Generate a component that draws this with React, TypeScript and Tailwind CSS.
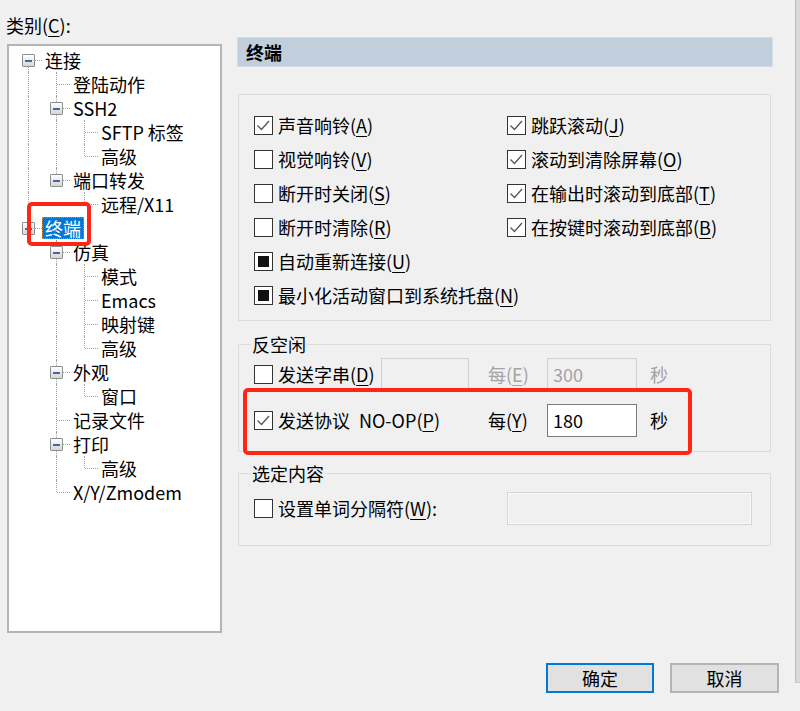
import React from 'react';

type TreeNode = { label: string; children?: TreeNode[] };
type Row = { node: TreeNode; level: number; guides: boolean[]; last: boolean; first: boolean };

const tree: TreeNode[] = [
  {
    label: '连接',
    children: [
      { label: '登陆动作' },
      { label: 'SSH2', children: [{ label: 'SFTP 标签' }, { label: '高级' }] },
      { label: '端口转发', children: [{ label: '远程/X11' }] },
    ],
  },
  {
    label: '终端',
    children: [
      { label: '仿真', children: [{ label: '模式' }, { label: 'Emacs' }, { label: '映射键' }, { label: '高级' }] },
      { label: '外观', children: [{ label: '窗口' }] },
      { label: '记录文件' },
      { label: '打印', children: [{ label: '高级' }] },
      { label: 'X/Y/Zmodem' },
    ],
  },
];

function flatten(nodes: TreeNode[], level: number, guides: boolean[], out: Row[]) {
  nodes.forEach((node, i) => {
    const last = i === nodes.length - 1;
    out.push({ node, level, guides, last, first: level === 0 && i === 0 });
    if (node.children) flatten(node.children, level + 1, [...guides, !last], out);
  });
  return out;
}

const rows = flatten(tree, 0, [], []);

// mnemonic letter, underlined like a Win32 dialog
const M = ({ c }: { c: string }) => (
  <>
    (<span className="underline underline-offset-[3px]">{c}</span>)
  </>
);

const Check = ({ state }: { state: 'on' | 'off' | 'mixed' }) => (
  <span className="w-[19px] h-[19px] border border-[#333333] bg-white flex items-center justify-center shrink-0">
    {state === 'on' && (
      <svg width="17" height="17" viewBox="0 0 17 17">
        <path d="M2.5 8.5 L6.5 12.5 L14 4" fill="none" stroke="#555555" strokeWidth="1.3" />
      </svg>
    )}
    {state === 'mixed' && <span className="w-[11px] h-[11px] bg-[#111111]" />}
  </span>
);

const Option = ({ state, children }: { state: 'on' | 'off' | 'mixed'; children: React.ReactNode }) => (
  <div className="h-[34px] flex items-center gap-[5px] whitespace-nowrap">
    <Check state={state} />
    <span className="leading-[24px]">{children}</span>
  </div>
);

const TreeRow = ({ row }: { row: Row }) => {
  const selected = row.node.label === '终端';
  return (
    <div className="h-[24px] flex items-stretch">
      {row.guides.map((g, i) => (
        <div key={i} className="relative w-[28px] shrink-0">
          {g && <div className="absolute left-[14px] top-0 bottom-0 border-l border-dotted border-[#a0a0a0]" />}
        </div>
      ))}
      <div className="relative w-[28px] shrink-0">
        <div
          className={`absolute left-[14px] border-l border-dotted border-[#a0a0a0] ${row.first ? 'top-[12px]' : 'top-0'} ${
            row.last ? 'bottom-[12px]' : 'bottom-0'
          }`}
        />
        <div className="absolute left-[15px] right-0 top-[12px] border-t border-dotted border-[#a0a0a0]" />
        {row.node.children && (
          <div className="absolute left-[8px] top-[6px] w-[13px] h-[13px] border border-[#8f8f8f] rounded-[1px] bg-gradient-to-b from-white to-[#d6d6d6] flex items-center justify-center">
            <span className="w-[7px] h-[2px] bg-[#4a64a8]" />
          </div>
        )}
      </div>
      <span
        className={`mt-px h-[22px] leading-[22px] px-[3px] whitespace-nowrap ${
          selected ? 'bg-[#0078d7] text-white outline outline-1 outline-dotted outline-[#d08a3c] -outline-offset-1' : ''
        }`}
      >
        {row.node.label}
      </span>
    </div>
  );
};

export default function App() {
  return (
    <div className="w-[800px] h-[711px] bg-[#f0f0f0] flex relative overflow-hidden font-['Noto_Sans_CJK_SC',sans-serif] text-[18px] text-black">
      <div className="w-[795px] flex flex-col">
        <div className="flex">
          {/* category tree */}
          <div className="flex flex-col">
            <div className="pl-[6px] pt-[13px] leading-[24px]">
              类别<M c="C" />:
            </div>
            <div className="ml-[7px] mt-[7px] w-[215px] h-[589px] border-2 border-[#b4b4b4] bg-white pt-[2px] pl-[5px]">
              {rows.map((r, i) => (
                <TreeRow key={i} row={r} />
              ))}
            </div>
          </div>

          {/* terminal page */}
          <div className="ml-[15px] mt-[37px] w-[536px] flex flex-col">
            <div className="h-[30px] bg-[#c1cfdd] border border-[#d4dee8] pl-[8px] flex items-center font-bold">终端</div>

            <div className="ml-px w-[533px] mt-[27px] border border-[#dcdcdc] pl-[15px] pt-[13px] pb-[8px] grid grid-cols-[253px_1fr]">
              <Option state="on">声音响铃<M c="A" /></Option>
              <Option state="on">跳跃滚动<M c="J" /></Option>
              <Option state="off">视觉响铃<M c="V" /></Option>
              <Option state="on">滚动到清除屏幕<M c="O" /></Option>
              <Option state="off">断开时关闭<M c="S" /></Option>
              <Option state="on">在输出时滚动到底部<M c="T" /></Option>
              <Option state="off">断开时清除<M c="R" /></Option>
              <Option state="on">在按键时滚动到底部<M c="B" /></Option>
              <div className="col-span-2">
                <Option state="mixed">自动重新连接<M c="U" /></Option>
              </div>
              <div className="col-span-2">
                <Option state="mixed">最小化活动窗口到系统托盘<M c="N" /></Option>
              </div>
            </div>

            <div className="relative ml-px w-[533px] mt-[23px] border border-[#dcdcdc] pl-[15px] pt-[13px] pb-[14px] flex flex-col gap-[13px]">
              <span className="absolute left-[12px] -top-[13px] bg-[#f0f0f0] px-px leading-[24px]">反空闲</span>
              <div className="h-[33px] flex items-center whitespace-nowrap">
                <div className="w-[127px] flex items-center gap-[5px]">
                  <Check state="off" />
                  <span>发送字串<M c="D" /></span>
                </div>
                <div className="w-[88px] h-[33px] border border-[#d0d0d0] bg-[#f0f0f0]" />
                <div className="w-[78px] pl-[19px] text-[#a3a3a3]">每<M c="E" /></div>
                <div className="w-[90px] h-[33px] border border-[#d0d0d0] bg-[#f0f0f0] pl-[5px] leading-[31px] text-[#a3a3a3]">300</div>
                <span className="ml-[13px] text-[#a3a3a3]">秒</span>
              </div>
              <div className="h-[33px] flex items-center whitespace-nowrap">
                <div className="w-[234px] flex items-center gap-[5px]">
                  <Check state="on" />
                  <span>
                    发送协议<span className="ml-[9px]">NO-OP<M c="P" /></span>
                  </span>
                </div>
                <div className="w-[59px]">每<M c="Y" /></div>
                <div className="w-[90px] h-[33px] border border-[#7a7a7a] bg-white pl-[5px] leading-[31px]">180</div>
                <span className="ml-[13px]">秒</span>
              </div>
            </div>

            <div className="relative ml-px w-[533px] mt-[21px] border border-[#dcdcdc] pl-[15px] pt-[18px] pb-[20px]">
              <span className="absolute left-[12px] -top-[13px] bg-[#f0f0f0] px-px leading-[24px]">选定内容</span>
              <div className="h-[33px] flex items-center whitespace-nowrap">
                <div className="w-[253px] flex items-center gap-[5px]">
                  <Check state="off" />
                  <span>设置单词分隔符<M c="W" />:</span>
                </div>
                <div className="w-[245px] h-[33px] border border-[#d4d4d4] bg-[#f0f0f0] shadow-[inset_0_0_0_1px_#fafafa]" />
              </div>
            </div>
          </div>
        </div>

        <div className="mt-[30px] flex justify-end gap-[16px] pr-[16px]">
          <button className="w-[108px] h-[30px] border-2 border-[#0078d7] bg-[#e1e1e1] leading-[26px]">确定</button>
          <button className="w-[109px] h-[30px] border-2 border-[#b4b4b4] bg-[#e1e1e1] leading-[26px]">取消</button>
        </div>
      </div>

      {/* window edge */}
      <div className="w-[5px] flex flex-col">
        <div className="h-[682px] border-l border-[#bdbdbd] bg-[#d9d9d9]" />
        <div className="flex-1 border-t border-[#c8c8c8]" />
      </div>

      {/* red annotation boxes */}
      <div className="absolute left-[27px] top-[202px] w-[64px] h-[44px] border-4 border-[#ff2617] rounded-[5px]" />
      <div className="absolute left-[243px] top-[388px] w-[449px] h-[67px] border-4 border-[#ff2617] rounded-[5px]" />
    </div>
  );
}
